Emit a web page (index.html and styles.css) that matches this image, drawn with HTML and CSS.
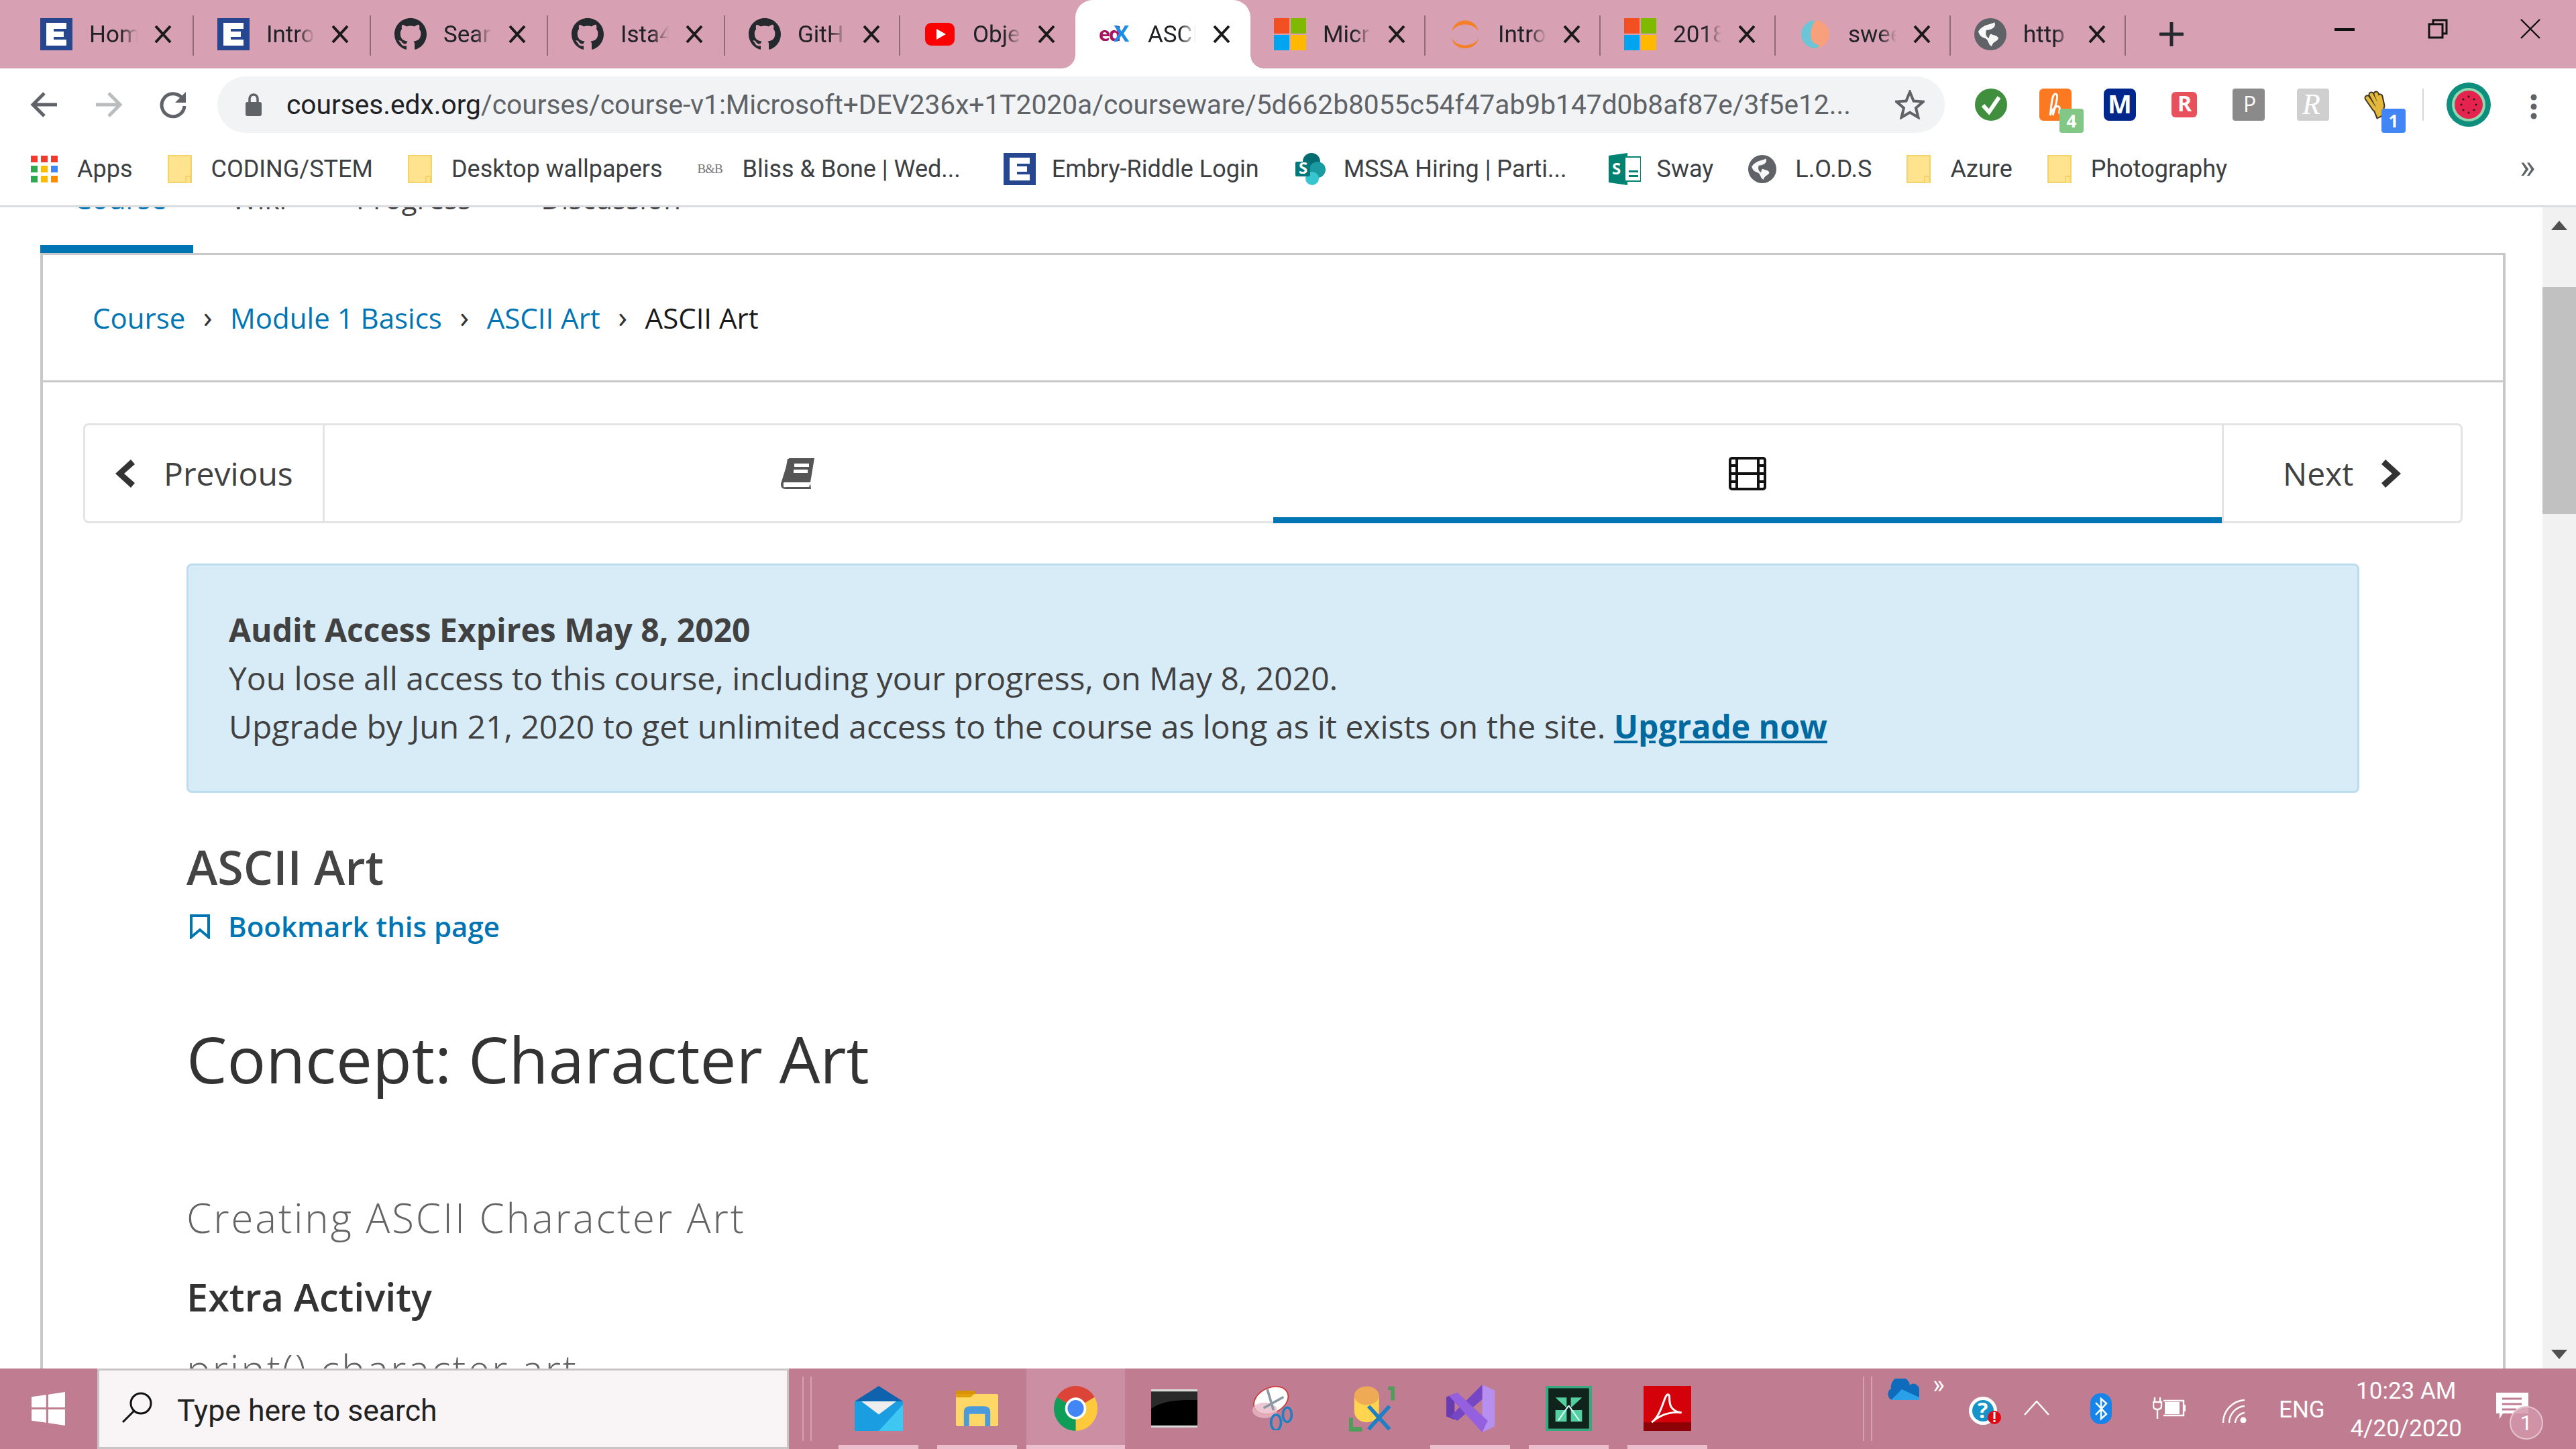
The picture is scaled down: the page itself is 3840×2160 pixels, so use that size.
FILE: index.html
```html
<!DOCTYPE html>
<html lang="en">
<head>
<meta charset="utf-8">
<title>ASCII Art | edX</title>
<link rel="stylesheet" href="styles.css">
</head>
<body>
<svg class="defs" xmlns="http://www.w3.org/2000/svg">
  <symbol id="i-x" viewBox="0 0 26 26"><path d="M2 1L24 25M24 1L2 25" stroke="#1a1a1a" stroke-width="4"/></symbol>
  <symbol id="i-e" viewBox="0 0 48 48"><rect width="48" height="48" fill="#26478f"/><path d="M9 7H39V16H20V20H35V28H20V32H39V41H9Z" fill="#fff"/></symbol>
  <symbol id="i-gh" viewBox="0 0 16 16"><path fill="#24292e" d="M8 0C3.58 0 0 3.58 0 8c0 3.54 2.29 6.53 5.47 7.59.4.07.55-.17.55-.38 0-.19-.01-.82-.01-1.49-2.01.37-2.53-.49-2.69-.94-.09-.23-.48-.94-.82-1.13-.28-.15-.68-.52-.01-.53.63-.01 1.08.58 1.23.82.72 1.21 1.87.87 2.33.66.07-.52.28-.87.51-1.07-1.78-.2-3.64-.89-3.64-3.95 0-.87.31-1.59.82-2.15-.08-.2-.36-1.02.08-2.12 0 0 .67-.21 2.2.82.64-.18 1.32-.27 2-.27.68 0 1.36.09 2 .27 1.53-1.04 2.2-.82 2.2-.82.44 1.1.16 1.92.08 2.12.51.56.82 1.27.82 2.15 0 3.07-1.87 3.75-3.65 3.95.29.25.54.73.54 1.48 0 1.07-.01 1.93-.01 2.2 0 .21.15.46.55.38A8.013 8.013 0 0016 8c0-4.42-3.58-8-8-8z"/></symbol>
  <symbol id="i-ms" viewBox="0 0 48 48"><rect width="23" height="23" fill="#f25022"/><rect x="25" width="23" height="23" fill="#7fba00"/><rect y="25" width="23" height="23" fill="#00a4ef"/><rect x="25" y="25" width="23" height="23" fill="#ffb900"/></symbol>
  <symbol id="i-globe" viewBox="0 0 48 48"><circle cx="24" cy="24" r="24" fill="#5f6368"/><path d="M6 20C14 8 26 10 30 6C34 14 24 16 24 22C24 26 34 24 36 30C34 36 28 34 26 42C20 40 22 32 16 30C10 28 8 26 6 20Z" fill="#fff" opacity=".95"/><path d="M18 18C24 18 28 14 34 14L30 22C26 22 22 24 22 30C18 28 16 24 18 18Z" fill="#5f6368"/></symbol>
  <symbol id="i-folder" viewBox="0 0 36 42"><path d="M1 1H35V41H1Z" fill="#ffe38f" stroke="#f2d369" stroke-width="2"/><path d="M27 41V32H34V41" fill="#ffe38f" stroke="#f2d369" stroke-width="2"/></symbol>
</svg>

<header class="tabstrip">
  <div class="tab sep wide"><svg class="ico"><use href="#i-e"/></svg><span class="tab-title">Hom</span><svg class="x"><use href="#i-x"/></svg></div>
  <div class="tab sep wide"><svg class="ico"><use href="#i-e"/></svg><span class="tab-title">Intro</span><svg class="x"><use href="#i-x"/></svg></div>
  <div class="tab sep wide"><svg class="ico"><use href="#i-gh"/></svg><span class="tab-title">Sear</span><svg class="x"><use href="#i-x"/></svg></div>
  <div class="tab sep wide"><svg class="ico"><use href="#i-gh"/></svg><span class="tab-title">Ista4</span><svg class="x"><use href="#i-x"/></svg></div>
  <div class="tab sep"><svg class="ico"><use href="#i-gh"/></svg><span class="tab-title">GitH</span><svg class="x"><use href="#i-x"/></svg></div>
  <div class="tab"><svg class="ico" viewBox="0 0 48 48"><rect x="2" y="7" width="44" height="34" rx="9" fill="#f00"/><path d="M19 16L33 24L19 32Z" fill="#fff"/></svg><span class="tab-title">Obje</span><svg class="x"><use href="#i-x"/></svg></div>
  <div class="tab active"><svg class="ico edx" viewBox="0 0 50 48"><text class="edx-ed" x="0" y="34">ed</text><text class="edx-x" x="23" y="35">X</text></svg><span class="tab-title">ASCI</span><svg class="x"><use href="#i-x"/></svg></div>
  <div class="tab sep"><svg class="ico"><use href="#i-ms"/></svg><span class="tab-title">Micr</span><svg class="x"><use href="#i-x"/></svg></div>
  <div class="tab sep"><svg class="ico" viewBox="0 0 48 48"><path d="M4 20C8 -2 40 -2 44 20C36 6 12 6 4 20ZM4 30C12 44 36 44 44 30C40 50 8 50 4 30Z" fill="#f58025"/></svg><span class="tab-title">Intro</span><svg class="x"><use href="#i-x"/></svg></div>
  <div class="tab sep"><svg class="ico"><use href="#i-ms"/></svg><span class="tab-title">2018</span><svg class="x"><use href="#i-x"/></svg></div>
  <div class="tab sep"><svg class="ico" viewBox="0 0 48 48"><circle cx="24" cy="24" r="21" fill="#f8a07c"/><path d="M24 3A21 21 0 0 0 24 45C30 45 32 40 24 38C14 34 16 14 24 3Z" fill="#6cc5d6"/></svg><span class="tab-title">swee</span><svg class="x"><use href="#i-x"/></svg></div>
  <div class="tab sep"><svg class="ico"><use href="#i-globe"/></svg><span class="tab-title">http</span><svg class="x"><use href="#i-x"/></svg></div>
  <span class="newtab"><svg viewBox="0 0 36 36"><path d="M18 1V35M1 18H35" stroke="#24292e" stroke-width="5" stroke-linecap="round"/></svg></span>
  <div class="winctl">
    <svg class="w-min" viewBox="0 0 30 6"><rect width="30" height="4" fill="#111"/></svg>
    <svg class="w-max" viewBox="0 0 30 30"><path d="M8 8V2H28V22H22M2 8H22V28H2Z" fill="none" stroke="#111" stroke-width="3"/></svg>
    <svg class="w-close" viewBox="0 0 30 30"><path d="M1 1L29 29M29 1L1 29" stroke="#111" stroke-width="2.4"/></svg>
  </div>
</header>

<div class="toolbar">
  <svg class="nav-ic" viewBox="0 0 42 42"><path d="M40 21H4M21 4L4 21L21 38" fill="none" stroke="#5f6368" stroke-width="5"/></svg>
  <svg class="nav-ic" viewBox="0 0 42 42"><path d="M2 21H38M21 4L38 21L21 38" fill="none" stroke="#babcbe" stroke-width="5"/></svg>
  <svg class="nav-ic" viewBox="0 0 42 42"><path d="M35 12A17 17 0 1 0 38 23" fill="none" stroke="#5f6368" stroke-width="5"/><path d="M40 2V18H24Z" fill="#5f6368"/></svg>
  <div class="omnibox">
    <svg class="lock" viewBox="0 0 24 34"><path d="M6 14V8A6 6 0 0 1 18 8V14" fill="none" stroke="#5f6368" stroke-width="3.5"/><rect y="13" width="24" height="21" rx="3" fill="#5f6368"/></svg>
    <span class="url"><span class="host">courses.edx.org</span>/courses/course-v1:Microsoft+DEV236x+1T2020a/courseware/5d662b8055c54f47ab9b147d0b8af87e/3f5e12...</span>
    <svg class="star" viewBox="0 0 44 44"><path d="M22 3L27.5 16.5L42 17.5L31 27L34.5 41L22 33.500L9.500 41L13 27L2 17.500L16.500 16.500Z" fill="none" stroke="#5f6368" stroke-width="4"/></svg>
  </div>
  <div class="exts">
    <svg class="ext" viewBox="0 0 48 48"><circle cx="24" cy="24" r="24" fill="#3f8f3f"/><path d="M12 25L21 35L36 13" fill="none" stroke="#fff" stroke-width="6"/></svg>
    <span class="ext-wrap"><svg class="ext" viewBox="0 0 48 48"><rect width="48" height="48" rx="6" fill="#fb7a21"/><path d="M20 40C24 26 30 8 24 8C18 8 18 30 16 40C20 28 28 24 30 28C32 32 26 38 34 38" fill="none" stroke="#fff" stroke-width="3"/></svg><span class="badge green">4</span></span>
    <svg class="ext" viewBox="0 0 48 48"><rect width="48" height="48" rx="8" fill="#00288c"/><text class="ext-t bold" x="6" y="37">M</text></svg>
    <svg class="ext" viewBox="0 0 48 48"><rect x="5" y="5" width="38" height="38" rx="6" fill="#e8505b"/><text class="ext-t bold small" x="14" y="34">R</text></svg>
    <svg class="ext" viewBox="0 0 48 48"><rect width="48" height="48" rx="4" fill="#8a8a8a"/><text class="ext-t small" x="16" y="35">P</text></svg>
    <svg class="ext" viewBox="0 0 48 48"><rect width="48" height="48" rx="4" fill="#cfcfcf"/><text class="ext-t serif" x="8" y="38">R</text></svg>
    <span class="ext-wrap"><svg class="ext" viewBox="0 0 48 48"><g fill="none" stroke-linecap="round"><g stroke="#3c3520" stroke-width="9"><path d="M9 14L20 30M15 9L24 26M22 8L28 24M28 12L31 26"/></g><path d="M18 28L32 26L34 38L24 43Z" fill="#3c3520" stroke="#3c3520" stroke-width="4"/><g stroke="#e3b83c" stroke-width="5"><path d="M9 14L20 30M15 9L24 26M22 8L28 24M28 12L31 26"/></g><path d="M20 29L31 27L32 37L25 41Z" fill="#e3b83c" stroke="#e3b83c" stroke-width="3"/></g></svg><span class="badge blue">1</span></span>
  </div>
  <span class="tool-sep"></span>
  <svg class="avatar" viewBox="0 0 66 66"><circle cx="33" cy="33" r="33" fill="#0e8f7d"/><circle cx="33" cy="33" r="25" fill="#8fd9b0"/><circle cx="33" cy="33" r="21" fill="#e5234f"/><g fill="#2b1a1a"><circle cx="33" cy="21" r="1.600"/><circle cx="22" cy="33" r="1.600"/><circle cx="44" cy="33" r="1.600"/><circle cx="33" cy="45" r="1.600"/><circle cx="25" cy="25" r="1.600"/><circle cx="41" cy="25" r="1.600"/><circle cx="25" cy="41" r="1.600"/><circle cx="41" cy="41" r="1.600"/></g></svg>
  <svg class="kebab" viewBox="0 0 10 38"><circle cx="5" cy="5" r="4.500" fill="#5f6368"/><circle cx="5" cy="19" r="4.500" fill="#5f6368"/><circle cx="5" cy="33" r="4.500" fill="#5f6368"/></svg>
</div>

<nav class="bookmarks">
  <span class="bm bm-apps"><svg class="bm-grid" viewBox="0 0 40 40"><g><rect width="10" height="10" fill="#ef3c2f"/><rect x="15" width="10" height="10" fill="#ef3c2f"/><rect x="30" width="10" height="10" fill="#ef3c2f"/><rect y="15" width="10" height="10" fill="#2fa84f"/><rect x="15" y="15" width="10" height="10" fill="#fbbc05"/><rect x="30" y="15" width="10" height="10" fill="#4285f4"/><rect y="30" width="10" height="10" fill="#2fa84f"/><rect x="15" y="30" width="10" height="10" fill="#fbbc05"/><rect x="30" y="30" width="10" height="10" fill="#fb8c00"/></g></svg>Apps</span>
  <span class="bm"><svg class="bm-folder"><use href="#i-folder"/></svg>CODING/STEM</span>
  <span class="bm"><svg class="bm-folder"><use href="#i-folder"/></svg>Desktop wallpapers</span>
  <span class="bm"><span class="bb">B&amp;B</span>Bliss &amp; Bone | Wed...</span>
  <span class="bm bm-embry"><svg class="bm-ico"><use href="#i-e"/></svg>Embry-Riddle Login</span>
  <span class="bm bm-mssa"><svg class="bm-ico" viewBox="0 0 48 48"><circle cx="24" cy="13" r="13" fill="#036c70"/><circle cx="33" cy="25" r="12" fill="#1a9ba1"/><circle cx="25" cy="38" r="10" fill="#37c6d0"/><rect y="13" width="22" height="22" rx="2" fill="#03787c"/><text class="ic-s" x="5" y="31">S</text></svg>MSSA Hiring | Parti...</span>
  <span class="bm bm-sway"><svg class="bm-ico" viewBox="0 0 48 48"><path d="M0 4L28 0V48L0 44Z" fill="#008272"/><rect x="24" y="6" width="24" height="36" fill="#fff" stroke="#008272" stroke-width="2"/><rect x="30" y="26" width="14" height="3" fill="#008272"/><rect x="30" y="33" width="14" height="3" fill="#008272"/><text class="ic-s" x="5" y="32">S</text></svg>Sway</span>
  <span class="bm bm-lods"><svg class="bm-globe"><use href="#i-globe"/></svg>L.O.D.S</span>
  <span class="bm"><svg class="bm-folder"><use href="#i-folder"/></svg>Azure</span>
  <span class="bm"><svg class="bm-folder"><use href="#i-folder"/></svg>Photography</span>
  <span class="bm-more">»</span>
</nav>

<main class="viewport">
  <div class="page">
    <div class="coursenav">
      <span class="navtab current">Course</span>
      <span class="navtab">Wiki</span>
      <span class="navtab">Progress</span>
      <span class="navtab">Discussion</span>
    </div>
    <section class="course">
      <div class="crumbs">
        <a class="crumb">Course</a><span class="chev">›</span>
        <a class="crumb">Module 1 Basics</a><span class="chev">›</span>
        <a class="crumb">ASCII Art</a><span class="chev">›</span>
        <span class="crumb-cur">ASCII Art</span>
      </div>
      <div class="seqnav">
        <div class="seq-btn prev"><svg class="chevron" viewBox="0 0 30 44"><path d="M24 1L30 8L14 22L30 36L24 43L1 22Z" fill="#333"/></svg>Previous</div>
        <div class="seq-tab"><svg class="seq-book" viewBox="0 0 50 46"><path d="M12 0H50L44 36H6C3 36 4 38 4 42C4 44 6 43 8 43H42L44 38L45 46H8C2 46 0 44 0 38Z" fill="#555"/><path d="M10 1H48L42 35H4Z" fill="#555"/><rect x="20" y="8" width="22" height="5" fill="#fff"/><rect x="19" y="17" width="21" height="5" fill="#fff"/></svg></div>
        <div class="seq-tab sel"><svg class="seq-film" viewBox="0 0 56 50"><rect x="2" y="2" width="52" height="46" rx="3" fill="none" stroke="#111" stroke-width="4"/><path d="M12 2V48M44 2V48M12 25H44M2 13H12M2 25H12M2 37H12M44 13H54M44 25H54M44 37H54" stroke="#111" stroke-width="4"/></svg></div>
        <div class="seq-btn next">Next<svg class="chevron" viewBox="0 0 30 44"><path d="M6 1L0 8L16 22L0 36L6 43L29 22Z" fill="#333"/></svg></div>
      </div>
      <div class="content">
        <div class="banner">
          <p class="banner-title">Audit Access Expires May 8, 2020</p>
          <p>You lose all access to this course, including your progress, on May 8, 2020.</p>
          <p>Upgrade by Jun 21, 2020 to get unlimited access to the course as long as it exists on the site. <a class="upgrade">Upgrade now</a></p>
        </div>
        <h2 class="unit-title">ASCII Art</h2>
        <a class="bookmark"><svg class="bookmark-ic" viewBox="0 0 32 38"><path d="M3 3H29V35L16 24L3 35Z" fill="none" stroke="#0075b4" stroke-width="4"/></svg>Bookmark this page</a>
        <h1 class="concept">Concept: Character Art</h1>
        <h3 class="sub">Creating ASCII Character Art</h3>
        <h4 class="extra">Extra Activity</h4>
        <h3 class="sub print">print() character art</h3>
      </div>
    </section>
  </div>
  <aside class="scrollbar">
    <svg class="sb-arrow" viewBox="0 0 24 14"><path d="M12 0L24 14H0Z" fill="#505050"/></svg>
    <div class="sb-track"><div class="sb-thumb"></div></div>
    <svg class="sb-arrow" viewBox="0 0 24 14"><path d="M12 14L24 0H0Z" fill="#505050"/></svg>
  </aside>
</main>

<footer class="taskbar">
  <span class="start"><svg viewBox="0 0 48 48"><path d="M0 7L21 4V22H0ZM24 3.500L48 0V22H24ZM0 25H21V44L0 41ZM24 25H48V48L24 44.500Z" fill="#fff"/></svg></span>
  <div class="search"><svg viewBox="0 0 48 48"><circle cx="30" cy="18" r="15" fill="none" stroke="#111" stroke-width="3"/><path d="M20 29L3 46" stroke="#111" stroke-width="3"/></svg><span class="search-text">Type here to search</span></div>
  <span class="bars first"></span>
  <div class="apps">
    <span class="app running"><svg class="a-mail" viewBox="0 0 72 82" preserveAspectRatio="none"><path d="M36 0L72 28H0Z" fill="#0f62ae"/><rect y="28" width="72" height="54" fill="#1b9de2"/><path d="M36 82L72 34V82Z" fill="#3fc7f4"/><path d="M10 28H62L36 52Z" fill="#eee"/></svg></span>
    <span class="app running"><svg class="a-folder" viewBox="0 0 64 64" preserveAspectRatio="none"><path d="M0 0H28L30 6H0Z" fill="#d99300"/><rect y="6" width="64" height="58" rx="3" fill="#ffd766"/><path d="M0 6H28L22 12H0Z" fill="#e29f0c"/><path d="M12 64V38Q12 28 22 28H42Q52 28 52 38V64H44V42H20V64Z" fill="#4a9bdc"/></svg></span>
    <span class="app active running"><svg class="a-chrome" viewBox="0 0 70 70" preserveAspectRatio="none"><path d="M4.700 17.500A35 35 0 0 1 65.300 17.500L35 35Z" fill="#db4437"/><path d="M65.300 17.500A35 35 0 0 1 35 70L35 35Z" fill="#ffc93c"/><path d="M35 70A35 35 0 0 1 4.700 17.500L35 35Z" fill="#0f9d58"/><circle cx="35" cy="35" r="17" fill="#fff"/><circle cx="35" cy="35" r="13" fill="#4285f4"/></svg></span>
    <span class="app"><svg class="a-term" viewBox="0 0 70 70" preserveAspectRatio="none"><rect width="70" height="70" fill="#d8d8d8"/><rect y="4" width="70" height="62" fill="#2a2a2a"/><path d="M0 66V36C14 22 40 18 70 20V66Z" fill="#000"/></svg></span>
    <span class="app"><svg class="a-snip" viewBox="0 0 70 80" preserveAspectRatio="none"><ellipse cx="32" cy="26" rx="30" ry="22" fill="#fff" stroke="#d23a3a" stroke-width="2" transform="rotate(-35 32 26)"/><ellipse cx="22" cy="44" rx="20" ry="14" fill="#e8b9c5" opacity=".8"/><path d="M26 6L36 44M52 20L20 40" stroke="#8e9aa3" stroke-width="4"/><ellipse cx="40" cy="66" rx="8" ry="14" fill="none" stroke="#1d7fc4" stroke-width="4"/><ellipse cx="58" cy="52" rx="7" ry="13" fill="none" stroke="#1d7fc4" stroke-width="4"/></svg></span>
    <span class="app"><svg class="a-tools" viewBox="0 0 70 80" preserveAspectRatio="none"><rect x="8" y="2" width="38" height="62" rx="19" fill="#ffd54f"/><ellipse cx="27" cy="18" rx="19" ry="16" fill="#eeaa55"/><path d="M60 2H70V26H64V8H60ZM0 56H6V72H20V80H0Z" fill="#4f9d5a"/><path d="M30 76L62 36M62 76L30 36" stroke="#1d7fc4" stroke-width="6"/></svg></span>
    <span class="app running"><svg class="a-vs" viewBox="0 0 70 84" preserveAspectRatio="none"><path d="M52 0L70 10V74L52 84Z" fill="#b78ff0"/><path d="M0 22L12 16V62L0 56Z" fill="#6a3bb0"/><path d="M6 56L52 0V26L16 64Z" fill="#7647c4"/><path d="M4 20L16 14L60 64L52 84Z" fill="#9460df"/></svg></span>
    <span class="app running"><svg class="a-tile" viewBox="0 0 66 78" preserveAspectRatio="none"><rect width="66" height="78" fill="#3aa981"/><rect x="4" y="4" width="58" height="70" fill="#10231d"/><path d="M14 20H30V38ZM52 20H36V38ZM14 42H30V62H14ZM52 42H36V62H52Z" fill="#54d0a0"/><path d="M33 34L18 60M33 34L48 60" stroke="#dff" stroke-width="2"/></svg></span>
    <span class="app running"><svg class="a-pdf" viewBox="0 0 70 74" preserveAspectRatio="none"><rect width="70" height="74" fill="#d4000a"/><rect y="60" width="70" height="14" fill="#8c0006"/><path d="M12 60C28 46 30 14 36 14C42 14 30 40 56 44C42 42 26 46 12 60Z" fill="none" stroke="#fff" stroke-width="3"/></svg></span>
  </div>
  <div class="tray">
    <span class="bars"></span>
    <svg class="t-od" viewBox="0 0 48 32"><path d="M8 32A8 9 0 0 1 6 15A14 15 0 0 1 34 10A9 11 0 0 1 48 22V32Z" fill="#0f6cbd"/><path d="M6 32L22 16L48 28V32Z" fill="#2aa0e8"/></svg>
    <span class="t-more">»</span>
    <svg class="t-help" viewBox="0 0 48 42"><circle cx="21" cy="21" r="21" fill="#fff"/><circle cx="21" cy="21" r="16" fill="#1694c9"/><text class="t-q" x="13" y="32">?</text><circle cx="38" cy="31" r="10" fill="#e30613"/><rect x="36.500" y="23" width="3" height="10" fill="#fff"/><rect x="36.500" y="35" width="3" height="3" fill="#fff"/></svg>
    <svg class="t-up" viewBox="0 0 38 22"><path d="M1 21L19 1L37 21" fill="none" stroke="#fff" stroke-width="2.400"/></svg>
    <svg class="t-bt" viewBox="0 0 32 46"><rect width="32" height="46" rx="15" fill="#1684e8"/><path d="M8 14L24 31L16 38V8L24 15L8 32" fill="none" stroke="#fff" stroke-width="2.500"/></svg>
    <svg class="t-power" viewBox="0 0 50 34"><path d="M3 1V8M11 1V8M1 8H13V14Q13 19 7 19Q1 19 1 14ZM7 19V33" fill="none" stroke="#fff" stroke-width="2.400"/><path d="M16 6H46V28H16" fill="none" stroke="#fff" stroke-width="2.400"/><rect x="18" y="8" width="22" height="18" fill="#fff"/><rect x="46" y="12" width="3" height="10" fill="#fff"/></svg>
    <svg class="t-wifi" viewBox="0 0 38 36"><path d="M2 36A34 34 0 0 1 34 2M11 36A25 25 0 0 1 34 11M20 36A16 16 0 0 1 34 21" fill="none" stroke="#fff" stroke-width="2.400"/><circle cx="32" cy="32" r="4.500" fill="#fff"/></svg>
    <span class="t-eng">ENG</span>
    <div class="t-clock"><span>10:23 AM</span><span>4/20/2020</span></div>
    <span class="t-notif"><svg viewBox="0 0 48 40"><path d="M0 0H48V31H10L5 39V31H0Z" fill="#fff"/><path d="M9 9H38M9 17H38M9 25H30" stroke="#c07c91" stroke-width="3"/></svg><span class="t-count">1</span></span>
  </div>
</footer>
</body>
</html>
```

FILE: styles.css
```css
* { box-sizing: border-box; }
html, body { margin: 0; padding: 0; }
body {
  width: 3840px;
  height: 2160px;
  display: flex;
  flex-direction: column;
  overflow: hidden;
  background: #fff;
  font-family: "Open Sans", "Noto Sans", sans-serif;
  color: #414141;
}
.defs { display: none; }
svg { display: block; flex: none; }

/* tab strip */
.tabstrip {
  height: 102px;
  flex: none;
  display: flex;
  background: #d7a0b3;
  padding-left: 25px;
  position: relative;
  font-family: "Roboto", "Open Sans", sans-serif;
}
.tab {
  width: 261px;
  height: 102px;
  flex: none;
  display: flex;
  align-items: center;
  padding: 0 0 0 35px;
  gap: 25px;
  position: relative;
  color: #202124;
  font-size: 35px;
}
.tab.wide { width: 264px; }
.tab.sep::after {
  content: "";
  position: absolute;
  right: 0;
  top: 23px;
  height: 60px;
  width: 2px;
  background: #8f6a78;
}
.tab .ico { width: 48px; height: 48px; margin-top: -1px; }
.tab-title {
  width: 72px;
  overflow: hidden;
  white-space: nowrap;
  -webkit-mask-image: linear-gradient(90deg, #000 65%, transparent 100%);
  mask-image: linear-gradient(90deg, #000 65%, transparent 100%);
}
.x { width: 26px; height: 26px; }
.tab.active {
  background: #fff;
  border-radius: 26px 26px 0 0;
}
.tab.active::before, .tab.active::after {
  content: "";
  position: absolute;
  bottom: 0;
  width: 20px;
  height: 20px;
}
.tab.active::before { left: -20px; background: radial-gradient(circle at 0 0, #d7a0b3 19.5px, #fff 20px); }
.tab.active::after { right: -20px; background: radial-gradient(circle at 100% 0, #d7a0b3 19.5px, #fff 20px); }
.edx { overflow: visible; }
.edx-ed { font: 700 30px "Open Sans", sans-serif; fill: #a6135e; letter-spacing: -2px; }
.edx-x { font: 700 36px "Open Sans", sans-serif; fill: #1b8ce3; }
.newtab { margin: 33px 0 0 50px; width: 36px; height: 36px; }
.winctl {
  position: absolute;
  top: 28px;
  left: 3480px;
  width: 307px;
  display: flex;
  justify-content: space-between;
}
.winctl svg { width: 30px; height: 30px; }
.winctl .w-min { height: 6px; margin-top: 14px; }

/* toolbar */
.toolbar {
  height: 96px;
  flex: none;
  display: flex;
  align-items: flex-end;
  padding-left: 45px;
  background: #fff;
}
.nav-ic { width: 42px; height: 42px; margin: 0 54px 21px 0; }
.omnibox {
  width: 2575px;
  height: 84px;
  margin-left: -9px;
  border-radius: 42px;
  background: #f1f3f4;
  display: flex;
  align-items: center;
  padding-left: 42px;
  flex: none;
  white-space: nowrap;
  font-family: "Roboto", "Open Sans", sans-serif;
  font-size: 40.7px;
  color: #5f6368;
}
.lock { width: 24px; height: 34px; margin-right: 37px; }
.url { flex: 1; }
.host { color: #202124; }
.star { width: 44px; height: 44px; margin-right: 30px; }
.exts { display: flex; gap: 48px; margin: 0 0 18px 45px; align-items: flex-start; }
.ext { width: 48px; height: 48px; }
.ext-wrap { position: relative; width: 48px; height: 48px; }
.badge {
  position: absolute;
  left: 30px;
  top: 30px;
  width: 36px;
  height: 36px;
  border-radius: 4px;
  color: #fff;
  font: 700 26px/36px "Open Sans", sans-serif;
  text-align: center;
}
.badge.green { background: #82c785; }
.badge.blue { background: #4285f4; }
.ext-t { font: 400 38px "Open Sans", sans-serif; fill: #fff; }
.ext-t.bold { font-weight: 700; }
.ext-t.small { font-size: 32px; }
.ext-t.serif { font: italic 400 44px "Liberation Serif", serif; }
.tool-sep { width: 2px; height: 48px; margin: 0 0 18px 43px; background: #d8d8d8; }
.avatar { width: 66px; height: 66px; margin: 0 0 9px 34px; }
.kebab { width: 10px; height: 38px; margin: 0 0 20px 59px; }

/* bookmarks */
.bookmarks {
  height: 111px;
  flex: none;
  display: flex;
  align-items: flex-start;
  padding: 30px 0 0 46px;
  border-bottom: 3px solid #dadce0;
  background: #fff;
  font-family: "Roboto", "Open Sans", sans-serif;
  font-size: 36px;
  color: #3c4043;
  gap: 52px;
  position: relative;
}
.bm { display: flex; align-items: center; gap: 29px; height: 48px; white-space: nowrap; }
.bm-embry { margin-left: 12px; gap: 24px; }
.bm-mssa { margin-left: 2px; gap: 24px; }
.bm-sway { margin-left: 10px; gap: 24px; }
.bm-lods { gap: 28px; }
.bm-grid { width: 40px; height: 40px; }
.bm-folder { width: 36px; height: 42px; }
.bm-ico { width: 48px; height: 48px; }
.bm-globe { width: 42px; height: 48px; }
.bb { width: 38px; font: 400 19px "Liberation Serif", serif; color: #777; letter-spacing: -1px; }
.ic-s { font: 700 24px "Open Sans", sans-serif; fill: #fff; }
.bm-more { position: absolute; left: 3756px; top: 26px; font-size: 50px; line-height: 50px; color: #5f6368; }

/* page */
.viewport { flex: 1; min-height: 0; display: flex; overflow: hidden; background: #fff; }
.page { flex: 1; min-width: 0; padding: 0 55px 0 60px; overflow: hidden; }
.coursenav { height: 68px; display: flex; font-size: 42px; color: #414141; overflow: hidden; }
.navtab {
  height: 68px;
  line-height: 18px;
  margin-top: -22px;
  padding: 0 52px;
  flex: none;
  white-space: nowrap;
}
.navtab.current { color: #0075b4; box-sizing: content-box; height: 78px; border-bottom: 12px solid #0075b4; padding: 0 42px 0 50px; width: 136px; margin-right: 5px; }
.course { border: 4px solid #c8c8c8; border-bottom: 0; border-top-width: 3px; height: 1700px; }
.crumbs {
  height: 190px;
  border-bottom: 3px solid #c8c8c8;
  display: flex;
  align-items: center;
  padding-left: 74px;
  font-size: 42px;
  gap: 26.500px;
}
.crumb { color: #0075b4; white-space: nowrap; }
.crumb-cur { color: #1a1a1a; }
.chev { color: #333; font-size: 46px; line-height: 1; margin-top: -6px; }
.seqnav {
  height: 149px;
  margin: 61px 60px 0;
  display: flex;
  border: 3px solid #e4e4e4;
  border-radius: 8px;
  font-size: 48px;
  color: #414141;
}
.seq-btn { width: 354px; flex: none; display: flex; align-items: center; padding-left: 44px; }
.seq-btn.prev { gap: 43px; }
.seq-btn.next { width: 356px; gap: 42px; padding-left: 88px; border-left: 3px solid #e4e4e4; }
.seq-tab { flex: 1; display: flex; align-items: center; justify-content: center; border-left: 3px solid #e4e4e4; }
.seq-tab.sel { border-bottom: 9px solid #0075b4; margin-bottom: -3px; border-left: 0; padding-top: 6px; background: #fff; }
.chevron { width: 30px; height: 44px; }
.seq-book { width: 50px; height: 46px; margin-right: 4px; }
.seq-film { width: 56px; height: 50px; }
.content { padding: 60px 214px 0; }
.banner {
  height: 342px;
  padding: 60px 60px 0;
  background: #d8ecf8;
  border: 3px solid #bcdcef;
  border-radius: 8px;
  font-size: 48px;
  line-height: 72px;
  color: #414141;
}
.banner p { margin: 0; white-space: nowrap; }
.banner-title { font-weight: 700; }
.upgrade { color: #0069a0; font-weight: 700; text-decoration: underline; }
.unit-title { margin: 62px 0 0; font-size: 70px; line-height: 96px; font-weight: 600; color: #444; }
.bookmark { display: flex; align-items: center; gap: 26px; margin-top: 11px; font-size: 42px; line-height: 60px; font-weight: 600; color: #0075b4; }
.bookmark-ic { width: 32px; height: 38px; margin-left: 4px; }
.concept { margin: 99px 0 0; font-size: 96px; line-height: 136px; font-weight: 400; color: #333; }
.sub { margin: 127px 0 0; font-size: 60px; line-height: 84px; font-weight: 300; letter-spacing: 2.900px; color: #646464; }
.extra { margin: 34px 0 0; font-size: 57.6px; line-height: 84px; font-weight: 600; color: #333; }
.sub.print { margin-top: 24px; }

/* scrollbar */
.scrollbar { width: 50px; flex: none; background: #f1f1f1; display: flex; flex-direction: column; align-items: center; padding: 20px 0 14px; }
.sb-arrow { width: 24px; height: 14px; }
.sb-track { flex: 1; width: 100%; }
.sb-thumb { width: 100%; height: 338px; margin-top: 85px; background: #c1c1c1; }

/* taskbar */
.taskbar {
  height: 120px;
  flex: none;
  display: flex;
  background: #c07c91;
  color: #fff;
}
.start { width: 145px; flex: none; display: flex; align-items: center; padding-left: 47px; }
.start svg { width: 50px; height: 60px; }
.search {
  width: 1031px;
  flex: none;
  border: 3px solid #c9c4c6;
  background: #f9f5f7;
  display: flex;
  align-items: center;
  padding-left: 32px;
  gap: 36px;
  font-family: "Roboto", "Open Sans", sans-serif;
  font-size: 44.6px;
  color: #222;
  white-space: nowrap;
}
.search svg { width: 48px; height: 48px; margin-top: -4px; }
.search-text { margin-top: 6px; }
.bars { width: 14px; height: 96px; flex: none; border-left: 2px solid #d7a0b3; border-right: 2px solid #d7a0b3; }
.bars.first { margin: 12px 0 0 20px; }
.apps { display: flex; margin-left: 26px; }
.app { width: 147px; height: 120px; flex: none; display: flex; align-items: center; justify-content: center; position: relative; }
.app svg { margin-top: -2px; }
.a-mail { width: 72px; height: 67px; }
.a-folder { width: 63px; height: 53px; }
.a-chrome { width: 65px; height: 67px; }
.a-term { width: 69px; height: 57px; }
.a-snip { width: 65px; height: 66px; }
.a-tools { width: 68px; height: 69px; }
.a-vs { width: 72px; height: 71px; }
.a-tile { width: 69px; height: 67px; }
.a-pdf { width: 71px; height: 67px; }
.app.running::after { content: ""; position: absolute; left: 14px; right: 14px; bottom: 0; height: 6px; background: #ebbfcd; }
.app.active { background: #cc8ea3; }
.app.active::after { left: 0; right: 0; }
.tray { flex: 1; display: flex; padding-left: 218px; align-items: flex-start; font-family: "Roboto", "Open Sans", sans-serif; }
.tray .bars { margin-top: 12px; }
.t-od { width: 48px; height: 32px; margin: 15px 0 0 22px; }
.t-more { width: 25px; margin: 2px 0 0 20px; font-size: 38px; line-height: 44px; }
.t-help { width: 48px; height: 42px; margin: 42px 0 0 29px; }
.t-q { font: 700 32px "Open Sans", sans-serif; fill: #fff; }
.t-up { width: 38px; height: 22px; margin: 48px 0 0 34px; }
.t-bt { width: 32px; height: 46px; margin: 37px 0 0 61px; }
.t-power { width: 50px; height: 34px; margin: 42px 0 0 61px; }
.t-wifi { width: 38px; height: 36px; margin: 45px 0 0 53px; }
.t-eng { margin: 38px 0 0 47px; font-size: 35px; line-height: 48px; }
.t-clock { width: 180px; margin: 6px 0 0 31px; display: flex; flex-direction: column; align-items: center; font-size: 35px; line-height: 56px; white-space: nowrap; }
.t-notif { position: relative; margin: 36px 0 0 44px; width: 48px; height: 40px; }
.t-notif svg { width: 48px; height: 40px; }
.t-count { position: absolute; left: 20px; top: 20px; width: 50px; height: 50px; border-radius: 50%; border: 2px solid #e6c4cf; background: rgba(210,150,170,.85); text-align: center; font-size: 32px; line-height: 46px; }
```
